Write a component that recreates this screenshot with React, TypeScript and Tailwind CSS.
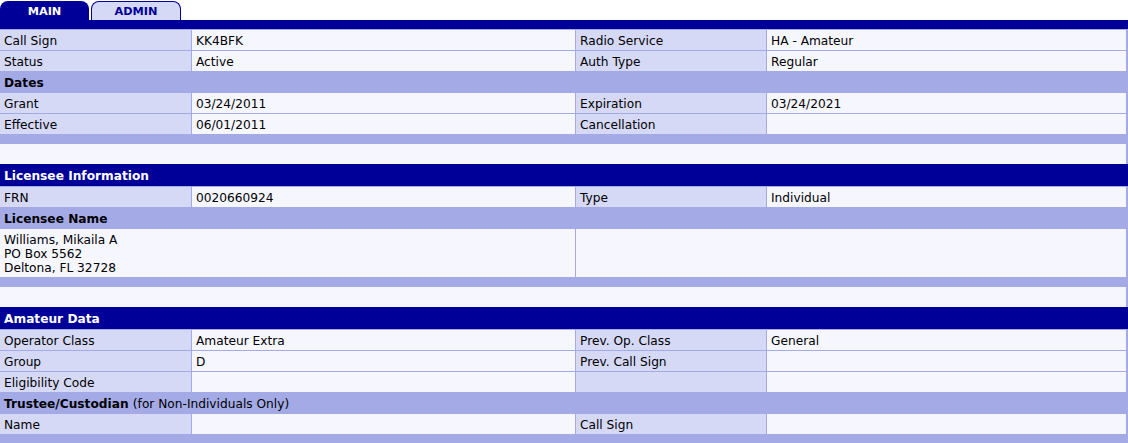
import React from "react";

const NAVY = "bg-[#000099]";

type Cell = { label: string; value: string };

function DataRow({ a, b }: { a: Cell; b: Cell }) {
  return (
    <div className="grid grid-cols-[191px_383px_190px_359px] gap-px h-[20px]">
      <div className="bg-[#D5D9F5] px-1 pt-[2px] leading-[18px] whitespace-nowrap">{a.label}</div>
      <div className="bg-[#F6F6FF] px-1 pt-[2px] leading-[18px] whitespace-nowrap">{a.value}</div>
      <div className="bg-[#D5D9F5] px-1 pt-[2px] leading-[18px] whitespace-nowrap">{b.label}</div>
      <div className="bg-[#F6F6FF] px-1 pt-[2px] leading-[18px] whitespace-nowrap">{b.value}</div>
    </div>
  );
}

function SubHeader({ children }: { children: React.ReactNode }) {
  return <div className="h-[20px] px-1 pt-[2px] leading-[18px] font-bold whitespace-nowrap">{children}</div>;
}

function Blank() {
  return <div className="h-[20px] bg-[#F6F6FF]" />;
}

function Spacer() {
  return <div className="h-[8px]" />;
}

function NavyHeader({ children }: { children: React.ReactNode }) {
  return (
    <div className={`${NAVY} h-[22px] px-1 pt-[2px] leading-[20px] text-white font-bold whitespace-nowrap`}>
      {children}
    </div>
  );
}

export default function App() {
  return (
    <div
      className="w-[1128px] h-[443px] overflow-hidden bg-white text-[12.2px] text-black"
      style={{ fontFamily: '"DejaVu Sans", Verdana, sans-serif' }}
    >
      {/* Tabs */}
      <div className="flex items-end h-[20px] gap-[2px] pt-px">
        <div className={`${NAVY} w-[89px] h-[19px] rounded-t-[8px] flex items-center justify-center pt-[3px] text-white font-bold text-[11.3px]`}>
          MAIN
        </div>
        <div className="w-[90px] h-[19px] rounded-t-[8px] border border-b-0 border-[#000099] bg-[#D5D9F5] flex items-center justify-center pt-[3px] text-[#000099] font-bold text-[11.3px]">
          ADMIN
        </div>
      </div>
      <div className={`${NAVY} h-[9px]`} />

      {/* Block A */}
      <div className="bg-[#A4AAE6] pt-px pr-[2px] flex flex-col gap-px">
        <DataRow a={{ label: "Call Sign", value: "KK4BFK" }} b={{ label: "Radio Service", value: "HA - Amateur" }} />
        <DataRow a={{ label: "Status", value: "Active" }} b={{ label: "Auth Type", value: "Regular" }} />
        <SubHeader>Dates</SubHeader>
        <DataRow a={{ label: "Grant", value: "03/24/2011" }} b={{ label: "Expiration", value: "03/24/2021" }} />
        <DataRow a={{ label: "Effective", value: "06/01/2011" }} b={{ label: "Cancellation", value: "" }} />
        <Spacer />
        <Blank />
      </div>
      <NavyHeader>Licensee Information</NavyHeader>

      {/* Block B */}
      <div className="bg-[#A4AAE6] pt-px pr-[2px] flex flex-col gap-px">
        <DataRow a={{ label: "FRN", value: "0020660924" }} b={{ label: "Type", value: "Individual" }} />
        <SubHeader>Licensee Name</SubHeader>
        <div className="grid grid-cols-[575px_550px] gap-px h-[48px]">
          <div className="bg-[#F6F6FF] px-1 pt-[4px] leading-[14px]">
            <div>Williams, Mikaila A</div>
            <div>PO Box 5562</div>
            <div>Deltona, FL 32728</div>
          </div>
          <div className="bg-[#F6F6FF]" />
        </div>
        <Spacer />
        <Blank />
      </div>
      <NavyHeader>Amateur Data</NavyHeader>

      {/* Block C */}
      <div className="bg-[#A4AAE6] pt-px pr-[2px] flex flex-col gap-px h-[120px]">
        <DataRow a={{ label: "Operator Class", value: "Amateur Extra" }} b={{ label: "Prev. Op. Class", value: "General" }} />
        <DataRow a={{ label: "Group", value: "D" }} b={{ label: "Prev. Call Sign", value: "" }} />
        <DataRow a={{ label: "Eligibility Code", value: "" }} b={{ label: "", value: "" }} />
        <SubHeader>
          Trustee/Custodian <span className="font-normal">(for Non-Individuals Only)</span>
        </SubHeader>
        <DataRow a={{ label: "Name", value: "" }} b={{ label: "Call Sign", value: "" }} />
      </div>
    </div>
  );
}
